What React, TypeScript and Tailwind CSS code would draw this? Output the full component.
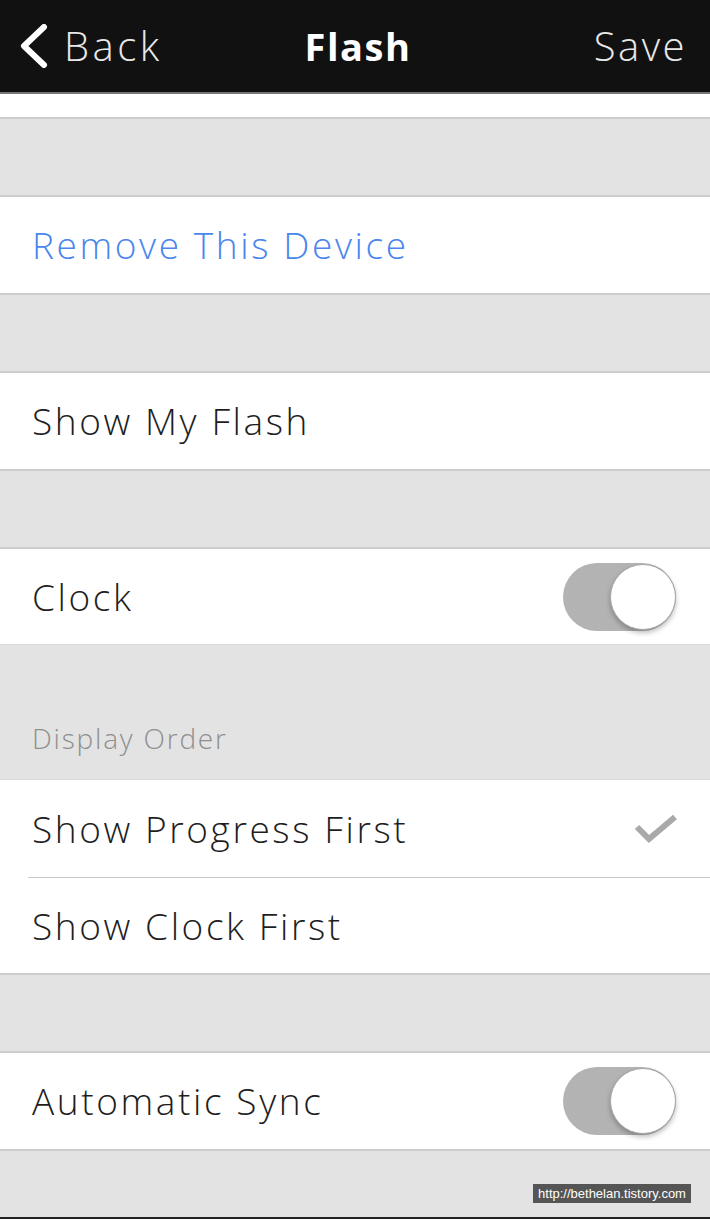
import { FC } from "react";

const font = { fontFamily: '"Open Sans", "Noto Sans", sans-serif' };

const Toggle: FC = () => (
  <div className="relative h-[68px] w-[113px] rounded-full bg-[#b3b3b3]">
    <div className="absolute right-0 top-[1px] h-[66px] w-[66px] rounded-full border border-[#a8a8a8] bg-white shadow-[0_3px_5px_rgba(0,0,0,0.25)]" />
  </div>
);

const Row: FC<{ label: string; blue?: boolean; right?: React.ReactNode; h?: string }> = ({
  label,
  blue,
  right,
  h = "h-[96px]",
}) => (
  <div className={`flex ${h} items-center justify-between bg-white pl-8 pr-[34px]`}>
    <span
      className={`text-[37px] font-light tracking-[2.6px] ${blue ? "text-[#4a86ee]" : "text-[#1e1e1e]"}`}
    >
      {label}
    </span>
    {right}
  </div>
);

const Gap: FC = () => <div className="h-[80px] border-y-2 border-[#cdcdcd] bg-[#e3e3e3]" />;

export default function App() {
  return (
    <div className="flex h-[1219px] w-[710px] flex-col overflow-hidden bg-[#e3e3e3]" style={font}>
      <div className="flex h-[94px] items-center justify-between border-b-2 border-[#777] bg-[#111111] pl-[18px] pr-[23px] text-white">
        <div className="flex items-center gap-[16px]">
          <svg width="30" height="44" viewBox="0 0 30 44">
            <path d="M26 3 L6 22 L26 41" fill="none" stroke="white" strokeWidth="6" strokeLinecap="round" strokeLinejoin="round" />
          </svg>
          <span className="text-[40px] font-light tracking-[3.5px] text-[#e8e8e8]">Back</span>
        </div>
        <span className="absolute left-0 right-0 mx-auto w-fit pl-[6px] text-[38px] font-bold tracking-[1.5px]">Flash</span>
        <span className="text-[40px] font-light tracking-[2.5px] text-[#e8e8e8]">Save</span>
      </div>
      <div className="h-[23px] bg-white" />
      <Gap />
      <Row label="Remove This Device" blue />
      <Gap />
      <Row label="Show My Flash" />
      <Gap />
      <Row label="Clock" h="h-[95px]" right={<Toggle />} />
      <div className="flex h-[136px] items-end border-y border-[#d8d8d8] bg-[#e3e3e3] pb-[20px] pl-8">
        <span className="text-[28px] font-light tracking-[1.8px] text-[#8f8f8f]">Display Order</span>
      </div>
      <Row
        label="Show Progress First"
        h="h-[97px]"
        right={
          <svg width="46" height="32" viewBox="0 0 46 32" className="mr-[-3px]">
            <path d="M4 14 L16 26 L42 4" fill="none" stroke="#a9a9a9" strokeWidth="6" />
          </svg>
        }
      />
      <div className="bg-white pl-[28px]">
        <div className="h-[1px] bg-[#c8c8c8]" />
      </div>
      <Row label="Show Clock First" h="h-[95px]" />
      <Gap />
      <Row label="Automatic Sync" right={<Toggle />} />
      <div className="relative flex-1 border-t-2 border-[#cdcdcd] bg-[#e3e3e3]">
        <div
          className="absolute left-[533px] top-[33px] w-[158px] bg-[#555] text-center text-[13px] leading-[19px] text-white"
          style={{ fontFamily: '"Liberation Sans", sans-serif' }}
        >
          http://bethelan.tistory.com
        </div>
        <div className="absolute bottom-0 left-0 right-0 h-[2px] bg-[#222]" />
      </div>
    </div>
  );
}
